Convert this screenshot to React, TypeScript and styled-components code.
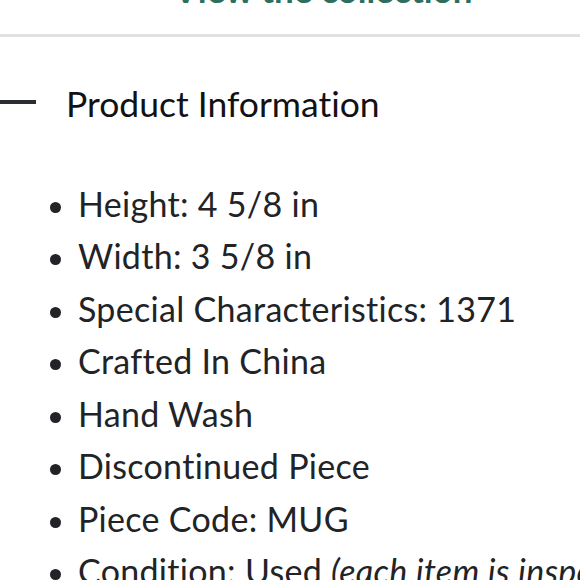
import React from "react";
import styled, { createGlobalStyle } from "styled-components";

const Global = createGlobalStyle`
  html, body { margin: 0; padding: 0; background: #ffffff; }
  body {
    font-family: Lato, "Noto Sans", sans-serif;
    color: #212327;
    overflow: hidden;
    font-variant-ligatures: none;
    font-feature-settings: "liga" 0, "clig" 0;
  }
`;

const Page = styled.div`
  width: 580px;
  height: 580px;
  overflow: hidden;
  display: flex;
  flex-direction: column;
  & > * { flex-shrink: 0; }
`;

const CollectionLink = styled.a`
  display: block;
  margin-top: -28px;
  padding-left: 66px;
  text-align: center;
  font-weight: 700;
  font-size: 35px;
  line-height: 34px;
  color: #2e6e60;
  text-decoration: none;
`;

const Divider = styled.div`
  margin-top: 28px;
  height: 3px;
  background: #e1e1e1;
  flex-shrink: 0;
`;

const Section = styled.section`
  display: flex;
  flex-direction: column;
`;

const Header = styled.div`
  display: flex;
  align-items: center;
  gap: 30px;
  margin-top: 46.5px;
  height: 40px;
  flex-shrink: 0;
`;

const Dash = styled.span`
  width: 36px;
  height: 4px;
  background: #2a2d33;
  flex: none;
  margin-bottom: 4px;
`;

const Title = styled.h2`
  margin: 0;
  font-weight: 400;
  font-size: 35.5px;
  line-height: 40px;
  color: #111214;
`;

const List = styled.ul`
  list-style: none;
  margin: 54px 0 0;
  padding: 0 0 0 50px;
  display: flex;
  flex-direction: column;
`;

const Item = styled.li`
  display: flex;
  align-items: center;
  gap: 17px;
  font-size: 34px;
  letter-spacing: 0.3px;
  line-height: 52.5px;
  height: 52.5px;
  flex-shrink: 0;
  white-space: nowrap;
  color: #212327;
  &::before {
    content: "";
    width: 11px;
    height: 11px;
    border-radius: 50%;
    background: #212327;
    flex: none;
    margin-top: 7px;
  }
`;

const Note = styled.em`
  font-style: italic;
`;

const items = [
  "Height: 4 5/8 in",
  "Width: 3 5/8 in",
  "Special Characteristics: 1371",
  "Crafted In China",
  "Hand Wash",
  "Discontinued Piece",
  "Piece Code: MUG",
];

export default function App() {
  return (
    <>
      <Global />
      <Page>
        <CollectionLink href="#">View the collection</CollectionLink>
        <Divider />
        <Section>
          <Header>
            <Dash />
            <Title>Product Information</Title>
          </Header>
          <List>
            {items.map((t) => (
              <Item key={t}>{t}</Item>
            ))}
            <Item>
              <span>
                Condition: Used <Note>(each item is inspected for quality)</Note>
              </span>
            </Item>
          </List>
        </Section>
      </Page>
    </>
  );
}
